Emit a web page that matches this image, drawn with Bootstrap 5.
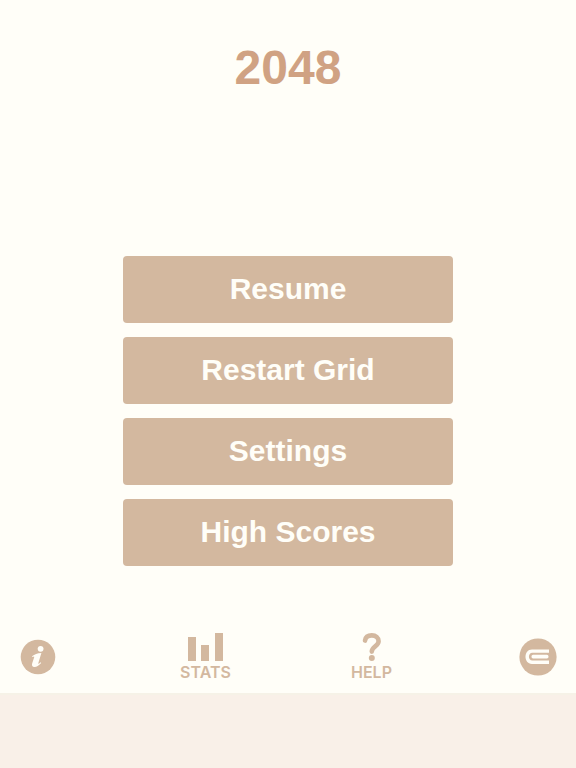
<!DOCTYPE html>
<html lang="en">
<head>
<meta charset="utf-8">
<meta name="viewport" content="width=device-width, initial-scale=1">
<title>2048</title>
<link href="https://cdn.jsdelivr.net/npm/bootstrap@5.3.0/dist/css/bootstrap.min.css" rel="stylesheet">
<style>
  :root { --cream: #fffef8; --tan: #d3b89f; --tan-dark: #d0a283; --band: #f9f0e8; }
  body { background: var(--cream); font-family: "Arial Rounded MT Bold", "Liberation Sans", Arial, sans-serif; }
  .game-title { padding-top: 40px; font-size: 48px; line-height: 56px; color: var(--tan-dark); }
  .menu-list { width: 80%; max-width: 330px; gap: 14px; padding-bottom: 67px; }
  .menu-btn { --bs-btn-color: var(--cream); --bs-btn-bg: var(--tan); --bs-btn-border-color: var(--tan); --bs-btn-hover-color: var(--cream); --bs-btn-hover-bg: #c9ab90; --bs-btn-hover-border-color: #c9ab90; width: 100%; padding: 15px 12px 16px; font-size: 30px; line-height: 36px; font-weight: 700; border-radius: 4px; border: 0; }
  .tool-bar { display: grid; grid-template-columns: 1fr auto 1fr; align-items: center; padding: 0 19px 12px 20px; }
  .tool-group { gap: 114px; }
  .tool-btn { color: var(--tan); line-height: 18px; }
  .tool-label { width: 52px; font: 600 16px/18px Inter, sans-serif; }
  .bottom-band { height: 75px; background: var(--band); border-top: 2px solid #f6f2e7; }
</style>
<script src="https://cdn.jsdelivr.net/npm/bootstrap@5.3.0/dist/js/bootstrap.bundle.min.js"></script>
</head>
<body class="d-flex flex-column min-vh-100">
  <header class="text-center">
    <h1 class="game-title fw-bold m-0">2048</h1>
  </header>
  <main class="flex-grow-1 d-flex flex-column justify-content-end align-items-center">
    <nav class="menu-list d-flex flex-column" aria-label="Game menu">
      <button type="button" class="btn menu-btn">Resume</button>
      <button type="button" class="btn menu-btn">Restart Grid</button>
      <button type="button" class="btn menu-btn">Settings</button>
      <button type="button" class="btn menu-btn">High Scores</button>
    </nav>
  </main>
  <footer>
    <div class="tool-bar">
      <button type="button" class="tool-btn btn border-0 p-0 me-auto" aria-label="About">
        <svg class="d-block" width="36" height="36" viewBox="0 0 36 36" aria-hidden="true">
          <circle cx="18" cy="18" r="17.3" fill="#d3b89f"/>
          <circle cx="20.6" cy="9.8" r="2.9" fill="#fffef8"/>
          <path d="M12 17.2C14.8 15.2 17 14.3 21.4 14L18.5 23.5C18 25.3 18.4 25.3 20.6 23.2L21.2 24C18.5 27 16.4 28.1 14.5 28C12 27.8 11.6 26.2 12.2 24.2L14.2 18.2C14.4 17.3 13.9 17.2 12.6 18Z" fill="#fffef8"/>
        </svg>
      </button>
      <div class="tool-group d-flex">
        <button type="button" class="tool-btn tool-label btn border-0 p-0">
          <svg class="d-block mx-auto" width="36" height="30" viewBox="0 0 36 30" aria-hidden="true">
            <path d="M0 4h8v24H0zM13 12h8v16h-8zM27 0h8v28h-8z" fill="#d3b89f"/>
          </svg>
          STATS
        </button>
        <button type="button" class="tool-btn tool-label btn border-0 p-0">
          <svg class="d-block mx-auto" width="20" height="30" viewBox="0 0 20 30" aria-hidden="true">
            <path d="M3 7.6C3.5 4.3 6.1 2.4 9.8 2.4C13.8 2.4 16.6 4.6 16.6 8.2C16.6 13.4 9.8 13.4 9.8 18.6" fill="none" stroke="#d3b89f" stroke-width="4.6" stroke-linecap="round"/>
            <circle cx="9.8" cy="25" r="3" fill="#d3b89f"/>
          </svg>
          HELP
        </button>
      </div>
      <button type="button" class="tool-btn btn border-0 p-0 ms-auto" aria-label="Guide">
        <svg class="d-block" width="38" height="38" viewBox="0 0 38 38" aria-hidden="true">
          <circle cx="19" cy="19" r="18.6" fill="#d3b89f"/>
          <path d="M30 11.5H13C4.4 11.5 4.4 25.9 13 25.9H30V22.6H13.4C8.8 22.6 8.8 14.8 13.4 14.8H30Z" fill="#fffef8"/>
          <rect x="12.5" y="16.8" width="17" height="3.6" rx="1.6" fill="#fffef8"/>
        </svg>
      </button>
    </div>
    <div class="bottom-band"></div>
  </footer>
</body>
</html>
